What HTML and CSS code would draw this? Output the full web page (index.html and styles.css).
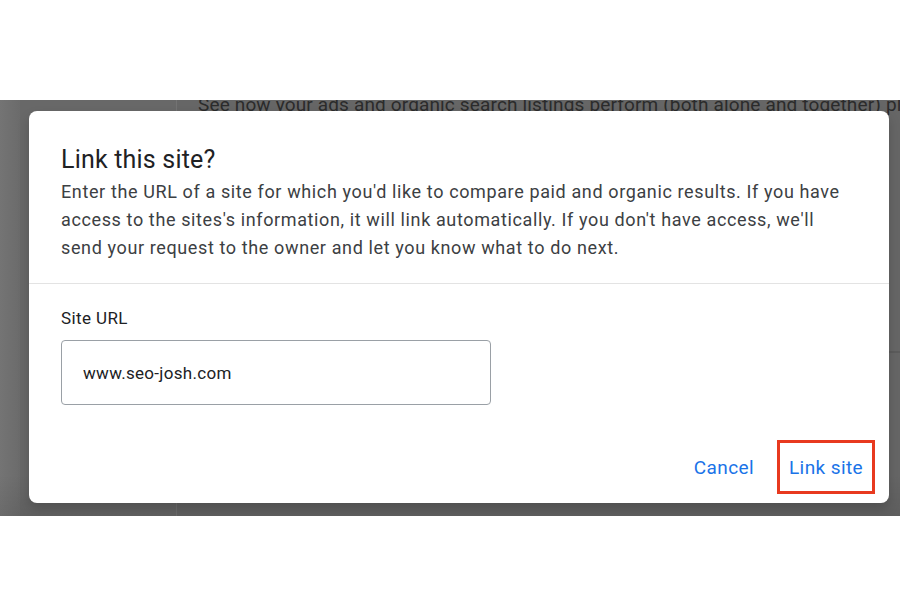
FILE: index.html
```html
<!DOCTYPE html>
<html lang="en">
<head>
<meta charset="utf-8">
<title>Link this site?</title>
<link rel="stylesheet" href="styles.css">
</head>
<body>
<div class="frame">
  <div class="page">
    <div class="rail"></div>
    <div class="sidebar"></div>
    <div class="content">
      <p class="intro">See now your ads and organic search listings perform (both alone and together) plus more</p>
      <div class="content-rule"></div>
    </div>
  </div>
  <div class="scrim">
    <div class="dialog" role="dialog" aria-labelledby="dlg-title">
      <div class="dialog-head">
        <h2 class="dialog-title" id="dlg-title">Link this site?</h2>
        <p class="dialog-text">Enter the URL of a site for which you'd like to compare paid and organic results. If you have access to the sites's information, it will link automatically. If you don't have access, we'll send your request to the owner and let you know what to do next.</p>
      </div>
      <div class="dialog-body">
        <label class="field-label" for="site-url">Site URL</label>
        <div class="field">
          <input class="field-input" id="site-url" type="text" value="www.seo-josh.com">
        </div>
      </div>
      <div class="dialog-actions">
        <button class="btn">Cancel</button>
        <button class="btn btn-marked">Link site</button>
      </div>
    </div>
  </div>
</div>
</body>
</html>
```

FILE: styles.css
```css
html, body {
  margin: 0;
  padding: 0;
  background: #ffffff;
}

body {
  font-family: Roboto, "Liberation Sans", Arial, sans-serif;
  color: #202124;
}

.frame {
  margin-top: 100px;
  height: 416px;
  position: relative;
  overflow: hidden;
  background: #666666;
}

.page {
  display: flex;
  height: 100%;
}

.rail {
  flex: 0 0 20px;
  background: linear-gradient(90deg, #747474, #6b6b6b);
}

.sidebar {
  flex: 0 0 156px;
  background: #686868;
  border-right: 1px solid #737373;
}

.content {
  flex: 1 1 auto;
  min-width: 0;
  padding-left: 21px;
  background: #666666;
}

.intro {
  margin: -5px 0 0 0;
  font-size: 19px;
  line-height: 20px;
  letter-spacing: 0.15px;
  color: #2b2b2b;
  white-space: nowrap;
}

.content-rule {
  margin-top: 236px;
  height: 2px;
  background: #5c5c5c;
}

.scrim {
  position: absolute;
  inset: 0;
  padding: 11px 11px 0 29px;
  background: linear-gradient(180deg, rgba(0,0,0,0) 0%, rgba(0,0,0,0) 90%, rgba(0,0,0,0.08) 100%);
}

.dialog {
  width: 860px;
  height: 392px;
  background: #ffffff;
  border-radius: 8px;
  box-shadow: 0 6px 12px rgba(0, 0, 0, 0.18);
  display: flex;
  flex-direction: column;
  box-sizing: border-box;
}

.dialog-head {
  padding: 35px 40px 21px 32px;
  border-bottom: 1px solid #e3e3e3;
}

.dialog-title {
  margin: 0;
  font-size: 25px;
  line-height: 28px;
  font-weight: 400;
  letter-spacing: 0.2px;
  color: #202124;
}

.dialog-text {
  margin: 4px 0 0 0;
  font-size: 18px;
  line-height: 28px;
  color: #3c4043;
  letter-spacing: 0.62px;
}

.dialog-body {
  padding: 22px 32px 0 32px;
  display: flex;
  flex-direction: column;
}

.field-label {
  font-size: 17px;
  line-height: 24px;
  letter-spacing: 0.4px;
  color: #202124;
}

.field {
  margin-top: 10px;
  width: 430px;
  height: 65px;
  box-sizing: border-box;
  border: 1px solid #9aa0a6;
  border-radius: 4px;
  display: flex;
  align-items: center;
  padding: 0 21px;
}

.field-input {
  border: 0;
  outline: 0;
  padding: 0;
  width: 100%;
  font-family: Roboto, "Liberation Sans", Arial, sans-serif;
  font-size: 17px;
  letter-spacing: 0.3px;
  color: #202124;
  background: transparent;
}

.dialog-actions {
  margin-top: auto;
  display: flex;
  justify-content: flex-end;
  gap: 11px;
  padding: 0 14px 9px 0;
}

.btn {
  height: 54px;
  padding: 0 9px;
  border: 3px solid transparent;
  background: transparent;
  font-family: Roboto, "Liberation Sans", Arial, sans-serif;
  font-size: 19px;
  font-weight: 400;
  color: #1a73e8;
  letter-spacing: 0.4px;
  cursor: pointer;
}

.btn-marked {
  border-color: #e8391f;
}
```
